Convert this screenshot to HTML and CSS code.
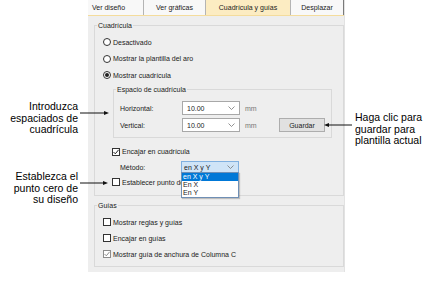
FILE: index.html
```html
<!DOCTYPE html>
<html lang="es">
<head>
    <meta charset="UTF-8">
    <title>Cuadrícula y guías</title>
    <link rel="stylesheet" href="styles.css">
</head>
<body>
    <div class="page">
        <div class="notes notes-left">
            <p class="note note-grid">Introduzca<br>espaciados de<br>cuadrícula</p>
            <p class="note note-zero">Establezca el<br>punto cero de<br>su diseño</p>
        </div>

        <div class="panel">
            <div class="tabs">
                <div class="tab tab-first">Ver diseño</div>
                <div class="tab tab-graphics">Ver gráficas</div>
                <div class="tab tab-active">Cuadrícula y guías</div>
                <div class="tab tab-last">Desplazar</div>
            </div>

            <fieldset class="group group-grid">
                <legend>Cuadrícula</legend>
                <div class="option"><span class="radio"></span>Desactivado</div>
                <div class="option"><span class="radio"></span>Mostrar la plantilla del aro</div>
                <div class="option"><span class="radio checked"></span>Mostrar cuadrícula</div>

                <fieldset class="group group-spacing">
                    <legend>Espacio de cuadrícula</legend>
                    <div class="field-row">
                        <span class="field-label">Horizontal:</span>
                        <div class="combo">10.00<svg class="chevron" width="7" height="4" viewBox="0 0 7 4"><path d="M0.5 0.5 L3.5 3.5 L6.5 0.5" /></svg></div>
                        <span class="unit">mm</span>
                    </div>
                    <div class="field-row">
                        <span class="field-label">Vertical:</span>
                        <div class="combo">10.00<svg class="chevron" width="7" height="4" viewBox="0 0 7 4"><path d="M0.5 0.5 L3.5 3.5 L6.5 0.5" /></svg></div>
                        <span class="unit">mm</span>
                        <button class="btn">Guardar</button>
                    </div>
                </fieldset>

                <div class="option option-indent option-snap"><span class="check checked"><svg width="6" height="6" viewBox="0 0 6 6"><path d="M0.5 3 L2.3 4.8 L5.6 0.8" /></svg></span>Encajar en cuadrícula</div>
                <div class="field-row method-row">
                    <span class="field-label method-label">Método:</span>
                    <div class="combo combo-focus">en X y Y<svg class="chevron" width="7" height="4" viewBox="0 0 7 4"><path d="M0.5 0.5 L3.5 3.5 L6.5 0.5" /></svg></div>
                </div>
                <div class="option option-indent option-origin"><span class="check"></span><span class="clipped">Establecer punto de origen</span></div>
            </fieldset>

            <div class="dropdown">
                <div class="dropdown-item selected">en X y Y</div>
                <div class="dropdown-item">En X</div>
                <div class="dropdown-item">En Y</div>
            </div>

            <fieldset class="group group-guides">
                <legend>Guías</legend>
                <div class="option option-guide"><span class="check"></span>Mostrar reglas y guías</div>
                <div class="option option-guide"><span class="check"></span>Encajar en guías</div>
                <div class="option option-guide"><span class="check checked muted"><svg width="6" height="6" viewBox="0 0 6 6"><path d="M0.5 3 L2.3 4.8 L5.6 0.8" /></svg></span>Mostrar guía de anchura de Columna C</div>
            </fieldset>
        </div>

        <div class="notes notes-right">
            <p class="note note-save">Haga clic para<br>guardar para<br>plantilla actual</p>
        </div>

        <!-- callout arrows drawn over the panel -->
        <svg class="arrows" width="436" height="290" viewBox="0 0 436 290">
            <line x1="80" y1="113" x2="105" y2="113" />
            <polygon points="109,113 104,111 104,115" />
            <line x1="80" y1="183" x2="104" y2="183" />
            <polygon points="108,183 103,181 103,185" />
            <line x1="352" y1="125" x2="328" y2="125" />
            <polygon points="324,125 329,123 329,127" />
        </svg>
    </div>
</body>
</html>
```

FILE: styles.css
```css
* {
    box-sizing: border-box;
}

body {
    margin: 0;
    font-family: "Liberation Sans", Arial, sans-serif;
    background-color: #fff;
    color: #000;
}

.page {
    position: relative;
    display: flex;
    width: 436px;
    height: 290px;
    overflow: hidden;
}

/* Callout text */
.notes-left {
    width: 88px;
    padding-right: 10px;
    text-align: right;
}

.notes-right {
    padding-left: 10px;
}

.note {
    margin: 0;
    font-size: 10.5px;
    line-height: 11.5px;
    white-space: nowrap;
}

.note-grid {
    margin-top: 101px;
}

.note-zero {
    margin-top: 35.5px;
}

.note-save {
    margin-top: 112px;
}

.arrows {
    position: absolute;
    top: 0;
    left: 0;
    pointer-events: none;
}

.arrows line {
    stroke: #111;
    stroke-width: 1;
}

.arrows polygon {
    fill: #111;
}

/* Dialog panel */
.panel {
    position: relative;
    flex: none;
    width: 257px;
    height: 272px;
    background-color: #eeeeee;
    border-right: 1px solid #e2e2e2;
    font-size: 7px;
    color: #1a1a1a;
}

.tabs {
    display: flex;
    height: 16px;
    line-height: 15px;
    background-color: #f8f8f8;
    border-bottom: 1px solid #f4dc9c;
}

.tab {
    border-right: 1px solid #b4b4b4;
    text-align: center;
    white-space: nowrap;
}

.tab-first {
    width: 56px;
    padding-left: 4px;
    text-align: left;
}

.tab-graphics {
    width: 62px;
}

.tab-active {
    width: 85px;
    background-color: #fcecc2;
}

.tab-last {
    width: 53px;
    border-right-color: #7a7a7a;
}

/* Group boxes */
.group {
    margin: 0;
    min-width: 0;
    border: 1px solid #d9d9d9;
    padding: 4px 0 6px 2px;
}

.group legend {
    padding: 0 1px;
    line-height: 9px;
}

.group-grid {
    margin: 5px 0 0 6px;
}

.group-spacing {
    margin: 1px 11px 0 16px;
    padding: 6px 0 3px 2px;
}

.group-guides {
    margin: 5px 0 0 6px;
    padding: 4px 0 4px 2px;
}

.option {
    display: flex;
    align-items: center;
    height: 16.5px;
    margin-left: 6px;
    white-space: nowrap;
}

.option-indent {
    margin-left: 15px;
}

.option-snap {
    height: 15px;
    margin-top: 6.5px;
}

.option-origin {
    height: 14px;
}

/* the open list covers the rest of this label */
.clipped {
    width: 59px;
    overflow: hidden;
}

.option-guide {
    height: 16px;
}

.radio {
    width: 8px;
    height: 8px;
    margin-right: 2px;
    border: 1px solid #333;
    border-radius: 50%;
    background-color: #fff;
    display: flex;
    align-items: center;
    justify-content: center;
}

.radio.checked::after {
    content: "";
    width: 4px;
    height: 4px;
    border-radius: 50%;
    background-color: #222;
}

.check {
    width: 8px;
    height: 8px;
    margin-right: 2px;
    border: 1px solid #333;
    background-color: #fff;
    display: flex;
    align-items: center;
    justify-content: center;
}

.check svg path {
    fill: none;
    stroke: #222;
    stroke-width: 1;
}

.check.muted {
    border-color: #8c8c8c;
}

.check.muted svg path {
    stroke: #8c8c8c;
}

/* Fields */
.field-row {
    display: flex;
    align-items: center;
    height: 17px;
    margin-left: 4px;
    white-space: nowrap;
}

.field-label {
    width: 62px;
}

.combo {
    width: 58px;
    height: 14px;
    display: flex;
    align-items: center;
    justify-content: space-between;
    padding: 0 4px 0 4px;
    border: 1px solid #a8a8a8;
    background-color: #fff;
}

.chevron path {
    fill: none;
    stroke: #777;
    stroke-width: 0.8;
}

.unit {
    width: 20px;
    margin-left: 5px;
    color: #777;
}

.btn {
    width: 46px;
    height: 14px;
    margin-left: 14px;
    padding: 0;
    font: inherit;
    color: #1a1a1a;
    background-color: #e1e1e1;
    border: 1px solid #adadad;
}

.method-row {
    height: 16px;
    margin-left: 23px;
}

.method-label {
    width: 61px;
}

.combo-focus {
    height: 12px;
    padding-left: 2px;
    background-color: #cfe4f7;
    border-color: #80b0e0;
}

/* Open list of the Método combo */
.dropdown {
    position: absolute;
    left: 93px;
    top: 172px;
    width: 58px;
    height: 26px;
    padding: 0;
    background-color: #fff;
    border: 1px solid #6f8fb5;
    box-shadow: 1px 1px 1px rgba(0, 0, 0, 0.2);
}

.dropdown-item {
    height: 8px;
    line-height: 8px;
    padding-left: 1px;
}

.dropdown-item.selected {
    background-color: #0078d7;
    color: #fff;
}
```
